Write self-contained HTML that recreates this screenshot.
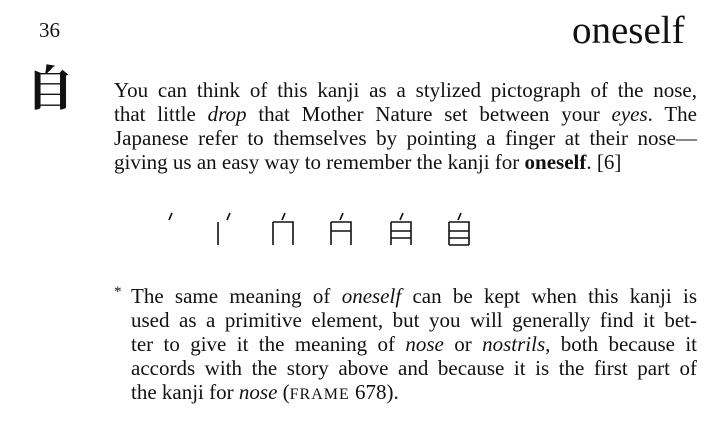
<!DOCTYPE html>
<html><head><meta charset="utf-8"><style>
body{margin:0;width:728px;height:444px;background:#fff;position:relative;overflow:hidden;font-family:"Liberation Serif",serif;color:#111}
.a{position:absolute}
.l{position:absolute;left:114px;width:583px;font-size:21px;line-height:24px;text-align:justify;text-align-last:justify;white-space:nowrap;height:24px}
.f{left:131px;width:566px}
.n{text-align-last:left}
i{font-style:italic}
</style></head><body>
<div class="a" style="left:39px;top:18px;font-size:21px">36</div>
<div class="a" style="left:572px;top:8px;font-size:39px">oneself</div>
<div class="a" style="left:26px;top:55px;font-size:48px;line-height:60px;font-family:'Noto Serif CJK SC',serif;font-weight:bold">自</div>
<div class="l" style="top:78px">You can think of this kanji as a stylized pictograph of the nose,</div>
<div class="l" style="top:102px">that little <i>drop</i> that Mother Nature set between your <i>eyes</i>. The</div>
<div class="l" style="top:126px">Japanese refer to themselves by pointing a finger at their nose—</div>
<div class="l n" style="top:150px;width:auto">giving us an easy way to remember the kanji for <b>oneself</b>. [6]</div>
<svg class="a" style="left:0;top:0" width="728" height="444" fill="none" stroke="#111" stroke-width="1.6">
<g transform="translate(159,212)"><path d="M13 1L10 8"/></g>
<g transform="translate(218,212)"><path d="M12 1L9 8M0 10V33"/></g>
<g transform="translate(273,212)"><path d="M12 1L9 8M0 10V33M0 10H20V33"/></g>
<g transform="translate(331,212)"><path d="M12 1L9 8M0 10V33M0 10H20V33M0 19H20"/></g>
<g transform="translate(391,212)"><path d="M12 1L9 8M0 10V33M0 10H20V33M0 19H20M0 26H20"/></g>
<g transform="translate(449,212)"><path d="M12 1L9 8M0 10V33M0 10H20V33M0 19H20M0 26H20M0 33H20"/></g>
</svg>
<div class="a" style="left:114px;top:284px;font-size:15px">*</div>
<div class="l f" style="top:284px">The same meaning of <i>oneself</i> can be kept when this kanji is</div>
<div class="l f" style="top:308px">used as a primitive element, but you will generally find it bet-</div>
<div class="l f" style="top:332px">ter to give it the meaning of <i>nose</i> or <i>nostrils,</i> both because it</div>
<div class="l f" style="top:356px">accords with the story above and because it is the first part of</div>
<div class="l f n" style="top:380px;width:auto">the kanji for <i>nose</i> (<span style="font-size:16px;letter-spacing:1px">FRAME</span> 678).</div>
</body></html>
